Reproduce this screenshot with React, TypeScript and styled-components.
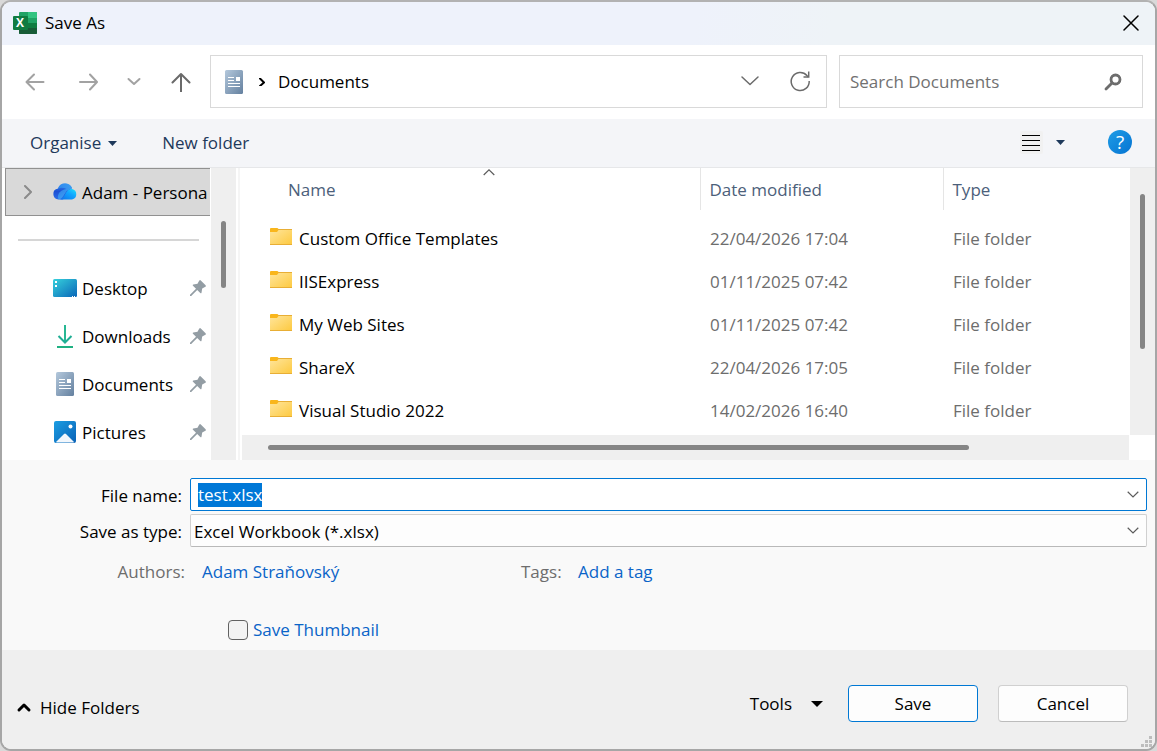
import React, { useEffect, useRef } from "react";
import styled, { createGlobalStyle, css } from "styled-components";

const GlobalStyle = createGlobalStyle`
  *, *::before, *::after { box-sizing: border-box; }
  html, body { margin: 0; padding: 0; }
  body {
    background: #d9d9d9;
    color: #000;
    font: 17px/24px "Open Sans", "Noto Sans", sans-serif;
  }
  button, input, select { font: inherit; color: inherit; margin: 0; }
`;

const Dialog = styled.main`
  position: relative;
  display: flex;
  flex-direction: column;
  min-height: 100vh;
  overflow: hidden;
  border: 2px solid #a6a6a6;
  border-top-color: #b2b2b2;
  border-radius: 11px;
  background: #fff;
`;

const TitleBar = styled.header`
  display: flex;
  align-items: center;
  gap: 8px;
  height: 43px;
  padding: 0 9px 2px 11px;
  background: linear-gradient(100deg, #eef2fb 0%, #eef2fb 60%, #eef3f7 72%);
`;

const Title = styled.h1`
  flex: 1;
  margin: 0;
  font-size: 17px;
  font-weight: 400;
`;

const PlainButton = styled.button`
  display: inline-flex;
  align-items: center;
  justify-content: center;
  padding: 0;
  border: 0;
  background: none;
  cursor: pointer;
`;

const CloseButton = styled(PlainButton)`
  width: 30px;
  height: 30px;
`;

const NavBar = styled.nav`
  display: flex;
  align-items: flex-start;
  height: 74px;
  padding: 10px 12px 0 6px;
`;

const NavButtons = styled.div`
  display: flex;
  flex: none;
  align-items: center;
  width: 202px;
  height: 53px;
`;

const NavButton = styled(PlainButton)<{ $narrow?: boolean; $strong?: boolean }>`
  width: ${(p) => (p.$narrow ? 40 : 53)}px;
  height: 40px;
  color: ${(p) => (p.$strong ? "#6a6a6a" : "#a2a2a2")};
`;

const AddressBar = styled.div`
  display: flex;
  flex: 1;
  align-items: center;
  gap: 12px;
  height: 53px;
  padding: 0 15px 0 11px;
  border: 1px solid #d9d9d9;
`;

const Crumb = styled(PlainButton)`
  flex: 1;
  justify-content: flex-start;
`;

const AddressAction = styled(PlainButton)`
  width: 39px;
  height: 24px;
  color: #6b6b6b;

  &:last-child {
    width: 22px;
    margin-left: 8px;
  }
`;

const SearchBox = styled.div`
  display: flex;
  align-items: center;
  width: 304px;
  height: 53px;
  margin-left: 12px;
  padding: 0 20px 0 10px;
  border: 1px solid #d9d9d9;
`;

const SearchInput = styled.input`
  flex: 1;
  min-width: 0;
  padding: 0;
  border: 0;
  outline: 0;
  background: none;

  &::placeholder { color: #717171; opacity: 1; }
`;

const Toolbar = styled.div`
  display: flex;
  align-items: center;
  gap: 45px;
  height: 49px;
  padding: 0 23px 0 28px;
  border-bottom: 1px solid #e6e7e9;
  background: #f4f5f8;
  color: #1e395b;
`;

const ToolbarButton = styled(PlainButton)`
  gap: 7px;
`;

const ViewButton = styled(PlainButton)`
  gap: 13px;
  margin: 0 -2px 2px auto;
`;

const HelpButton = styled(PlainButton)`
  width: 24px;
  height: 24px;
  margin-bottom: 2px;
  border-radius: 50%;
  background: linear-gradient(135deg, #1f9de6, #0573d2);
  color: #fff;
  font-size: 19px;
  line-height: 24px;
`;

const Browser = styled.div`
  display: flex;
  flex: 1;
  min-height: 292px;
`;

const TreePane = styled.aside`
  display: flex;
  flex: none;
  width: 238px;
  border-right: 2px solid #f5f5f5;
`;

const TreeList = styled.ul`
  width: 209px;
  margin: 0;
  padding: 0;
  overflow: hidden;
  list-style: none;
`;

const TreeItem = styled.li<{ $selected?: boolean }>`
  display: flex;
  align-items: center;
  height: 48px;
  margin-left: 3px;
  padding: 0 5px 0 15px;
  border: 1px solid transparent;
  border-right: 0;
  white-space: nowrap;

  ${(p) =>
    p.$selected &&
    css`
      margin-right: 1px;
      padding-right: 3px;
      border-color: #919191;
      background: #d9d9d9;
    `}
`;

const Expander = styled(PlainButton)`
  width: 32px;
  height: 24px;
  flex: none;
  justify-content: flex-start;
  color: #8b8b8b;
`;

const ExpanderSpace = styled.span`
  flex: none;
  width: 32px;
`;

const TreeLabel = styled.a`
  display: flex;
  flex: 1;
  min-width: 0;
  align-items: center;
  gap: 5px;
  overflow: hidden;
  color: inherit;
  text-decoration: none;

  svg { flex: none; }
  span { padding-top: 1px; }
`;

const TreeDivider = styled.li`
  display: flex;
  align-items: center;
  height: 48px;
  padding: 0 12px 0 16px;

  &::before {
    content: "";
    flex: 1;
    height: 2px;
    background: #d6d6d6;
  }
`;

const Track = styled.div<{ $horizontal?: boolean }>`
  display: flex;
  background: #efefef;
  ${(p) => (p.$horizontal ? "height: 25px; margin: 0 1px 0 2px;" : "width: 25px;")}
`;

const Thumb = styled.div<{ $horizontal?: boolean; $start: number; $length: number }>`
  border-radius: 3px;
  background: #858585;
  ${(p) =>
    p.$horizontal
      ? css`
          width: ${p.$length}%;
          height: 5px;
          margin: 10px 0 0 ${p.$start}px;
        `
      : css`
          width: 5px;
          height: ${p.$length}%;
          margin: ${p.$start}px 0 0 10px;
        `}
`;

const FilePane = styled.section`
  display: grid;
  flex: 1;
  min-width: 0;
  grid-template-columns: minmax(0, 1fr) 25px;
  grid-template-rows: minmax(0, 1fr) 25px;
`;

const TableArea = styled.div`
  overflow: hidden;
`;

const FileTable = styled.table`
  width: 100%;
  border-collapse: collapse;
  table-layout: fixed;

  thead::after {
    content: "";
    display: block;
    height: 7px;
  }
`;

const NameCol = styled.col``;
const DateCol = styled.col`width: 243px;`;
const TypeCol = styled.col`width: 187px;`;

const HeadCell = styled.th<{ $first?: boolean }>`
  height: 42px;
  padding: 0 0 0 ${(p) => (p.$first ? 39 : 0)}px;
  border-left: ${(p) => (p.$first ? "0" : "1px solid #e5e5e5")};
  vertical-align: top;
  color: #4c607a;
  font-weight: 400;
  text-align: left;
`;

const SortButton = styled.button`
  display: block;
  width: 100%;
  padding: 1px 9px 0;
  border: 0;
  background: none;
  text-align: left;
  cursor: pointer;
`;

const SortMark = styled.span`
  display: flex;
  justify-content: center;
  height: 9px;
`;

const Cell = styled.td<{ $first?: boolean }>`
  height: 43px;
  padding: 0 0 0 ${(p) => (p.$first ? 29 : 10)}px;
  color: ${(p) => (p.$first ? "#000" : "#6d6d6d")};
  white-space: nowrap;
`;

const FileName = styled.span`
  display: flex;
  align-items: center;
  gap: 6px;
`;

const Form = styled.form`
  height: 190px;
  padding: 18px 8px 0 0;
  background: #f9f9f9;
`;

const FieldRow = styled.div`
  display: grid;
  grid-template-columns: 180px minmax(0, 1fr);
  column-gap: 8px;
  align-items: center;
  margin-bottom: 3px;

  > label {
    padding-top: 2px;
    text-align: right;
  }
`;

const ComboBox = styled.div<{ $active?: boolean }>`
  display: grid;
  grid-template-columns: minmax(0, 1fr) 26px;
  height: 33px;
  border: 1px solid ${(p) => (p.$active ? "#0078d4" : "#d0d0d0")};
  border-bottom-color: ${(p) => (p.$active ? "#0078d4" : "#b9b9b9")};
  border-radius: 2px;
  background: ${(p) => (p.$active ? "#fff" : "#fdfdfd")};
  color: #5c5c5c;

  > svg {
    grid-area: 1 / 2;
    place-self: center;
    pointer-events: none;
  }
`;

const NameInput = styled.input`
  padding: 0 7px;
  border: 0;
  outline: 0;
  background: none;
  color: #000;

  &::selection { background: #0078d7; color: #fff; }
`;

const TypeSelect = styled.select`
  grid-area: 1 / 1 / 2 / 3;
  appearance: none;
  padding: 2px 3px 0;
  border: 0;
  outline: 0;
  background: none;
  color: #000;
`;

const MetaRow = styled.dl`
  display: grid;
  grid-template-columns: 183px 336px 57px minmax(0, 1fr);
  margin: 13px 0 0;
`;

const MetaLabel = styled.dt<{ $end?: boolean }>`
  color: #6d6d6d;
  text-align: ${(p) => (p.$end ? "right" : "left")};
`;

const MetaValue = styled.dd<{ $inset?: boolean }>`
  margin: 0 0 0 ${(p) => (p.$inset ? 17 : 0)}px;
`;

const MetaLink = styled.a`
  color: #0a64c8;
  text-decoration: none;
`;

const CheckLabel = styled.label`
  display: inline-flex;
  align-items: center;
  gap: 5px;
  margin: 34px 0 0 226px;
  color: #0a64c8;
`;

const CheckBox = styled.input`
  appearance: none;
  width: 20px;
  height: 20px;
  border: 1px solid #626262;
  border-radius: 4px;
  background: #f3f3f3;
`;

const Footer = styled.footer`
  display: flex;
  align-items: flex-start;
  gap: 20px;
  height: 99px;
  padding: 35px 27px 0 14px;
  background: #efefef;
`;

const HideButton = styled(PlainButton)`
  gap: 8px;
  height: 45px;
  margin-right: auto;
`;

const ToolsButton = styled(PlainButton)`
  gap: 19px;
  height: 37px;
  padding-right: 5px;
`;

const PushButton = styled.button<{ $primary?: boolean }>`
  width: 130px;
  height: 37px;
  padding: 1px 0 0;
  border: 1px solid ${(p) => (p.$primary ? "#0078d4" : "#d0d0d0")};
  border-bottom-color: ${(p) => (p.$primary ? "#0078d4" : "#bcbcbc")};
  border-radius: 4px;
  background: #fdfdfd;
`;

const Grip = styled.svg`
  position: absolute;
  right: 3px;
  bottom: 2px;
`;

const ExcelIcon = () => (
  <svg width="24" height="22" viewBox="0 0 24 22" aria-hidden="true">
    <rect x="6" width="18" height="22" rx="1" fill="#21a366" />
    <path d="M15 0h8a1 1 0 0 1 1 1v5h-9z" fill="#33c481" />
    <path d="M6 6h9v5H6z" fill="#107c41" />
    <path d="M15 11h9v5h-9z" fill="#107c41" />
    <path d="M6 11h9v5H6z" fill="#185c37" />
    <path d="M6 16h18v5a1 1 0 0 1-1 1H7a1 1 0 0 1-1-1z" fill="#185c37" />
    <rect y="4" width="15" height="14" rx="1" fill="#107c41" />
    <text x="7" y="15" textAnchor="middle" fill="#fff" fontFamily="Open Sans, sans-serif" fontWeight="700" fontSize="12">X</text>
  </svg>
);

const Arrow = ({ d, size = 20, width = 2 }: { d: string; size?: number; width?: number }) => (
  <svg width={size} height={size} viewBox={`0 0 ${size} ${size}`} fill="none" stroke="currentColor" strokeWidth={width} strokeLinecap="round" strokeLinejoin="round" aria-hidden="true">
    <path d={d} />
  </svg>
);

const SmallChevron = ({ up }: { up?: boolean }) => (
  <svg width="12" height="7" viewBox="0 0 12 7" fill="none" stroke="#5c5c5c" strokeWidth="1.2" aria-hidden="true">
    <path d={up ? "M.7 6 6 .9 11.300 6" : "M.7.8 6 6l5.300-5.200"} />
  </svg>
);

const Caret = ({ large }: { large?: boolean }) => (
  <svg width={large ? 12 : 9} height={large ? 6 : 5} viewBox="0 0 12 6" preserveAspectRatio="none" fill="currentColor" aria-hidden="true">
    <path d="M0 0h12L6 6z" />
  </svg>
);

const DocumentIcon = ({ id }: { id: string }) => (
  <svg width="24" height="24" viewBox="0 0 24 24" aria-hidden="true">
    <defs>
      <linearGradient id={id} x1="0" y1="0" x2="1" y2="1">
        <stop offset="0" stopColor="#b4c8dc" />
        <stop offset="1" stopColor="#64809f" />
      </linearGradient>
    </defs>
    <rect x="3" width="18" height="24" rx="1.500" fill={`url(#${id})`} />
    <path d="M6 7.500h6M6 10.500h6M6 13.500h12M6 16.500h12" stroke="#fff" />
    <rect x="14" y="7" width="4" height="4" fill="#fff" />
  </svg>
);

const CloudIcon = () => (
  <svg width="24" height="24" viewBox="0 0 24 24" aria-hidden="true">
    <defs>
      <linearGradient id="cloudBack" x1="0" y1="0" x2="0" y2="1">
        <stop offset="0" stopColor="#2f8ff0" />
        <stop offset=".5" stopColor="#1e50d4" />
        <stop offset="1" stopColor="#2b6fe8" />
      </linearGradient>
      <linearGradient id="cloudTop" x1="0" y1="0" x2="1" y2="1">
        <stop offset="0" stopColor="#2f86ee" />
        <stop offset="1" stopColor="#4fc4fa" />
      </linearGradient>
      <linearGradient id="cloudFront" x1="0" y1="1" x2="1" y2="0">
        <stop offset="0" stopColor="#0f6fe8" />
        <stop offset=".6" stopColor="#12a5ff" />
        <stop offset="1" stopColor="#1fe0fb" />
      </linearGradient>
    </defs>
    <path d="M5.500 19.500A5.600 5.600 0 0 1 5 8.400 7.500 7.500 0 0 1 19 8l-9 11.500z" fill="url(#cloudBack)" />
    <path d="M5 8.400A7.500 7.500 0 0 1 19.300 9.200c-4-.4-6 2-8 5.300-1.500 2.500-3 4.500-5.300 5-2-2-1-6 1.500-8 2-1.500 4-2.500 6-2.600-3-1.500-6-1.500-8.500-.5z" fill="url(#cloudTop)" opacity=".75" />
    <path d="M6 19.500c3 0 4.500-2.500 6-5 1.700-3 3.500-5.500 7-5.400a5.300 5.300 0 0 1 0 10.400z" fill="url(#cloudFront)" />
  </svg>
);

const DesktopIcon = () => (
  <svg width="24" height="24" viewBox="0 0 24 24" aria-hidden="true">
    <defs>
      <linearGradient id="desk" x1="0" y1="0" x2="1" y2="1">
        <stop offset="0" stopColor="#36d1dc" />
        <stop offset="1" stopColor="#0a66b8" />
      </linearGradient>
    </defs>
    <rect y="3" width="24" height="18" rx="1.500" fill="url(#desk)" />
    <path d="M2 5h2v2H2zM2 9h2v2H2zM19 20h1v1h-1zM21 20h1v1h-1z" fill="#fff" />
  </svg>
);

const DownloadIcon = () => (
  <svg width="24" height="24" viewBox="0 0 24 24" fill="none" strokeWidth="2" aria-hidden="true">
    <path d="M12 1v17" stroke="#27b793" />
    <path d="m5.500 12 6.500 6.500 6.500-6.500" stroke="#1fae94" />
    <path d="M4 23h16" stroke="#1fb182" />
  </svg>
);

const PictureIcon = () => (
  <svg width="24" height="24" viewBox="0 0 24 24" aria-hidden="true">
    <defs>
      <linearGradient id="pic" x1="0" y1="0" x2="1" y2="1">
        <stop offset="0" stopColor="#1b9de2" />
        <stop offset="1" stopColor="#0a62b6" />
      </linearGradient>
    </defs>
    <rect x="1" y="1" width="22" height="22" rx="2" fill="url(#pic)" />
    <path d="M3 22 11 14q1-1 2 0l8 8q-.5.500-1 .5H4q-.5 0-1-.5z" fill="#f2f7fc" />
    <circle cx="17.500" cy="6.500" r="2" fill="#fff" />
  </svg>
);

const PinIcon = () => (
  <svg width="16" height="16" viewBox="0 0 16 16" fill="#939da4" aria-hidden="true">
    <path d="M9.300.6q.7-.9 1.500-.1l4.800 4.800q.7.900-.2 1.400l-3.200 1.700-.7 4.300q-.3 1.100-1.200.3L7.200 9.900 1.200 16H0v-1.200l6-6L3 5.800q-.7-.9.300-1.200l4.200-.8z" />
  </svg>
);

const FolderIcon = () => (
  <svg width="24" height="24" viewBox="0 0 24 24" aria-hidden="true">
    <defs>
      <linearGradient id="folder" x1="0" y1="0" x2="1" y2="1">
        <stop offset="0" stopColor="#ffe59b" />
        <stop offset="1" stopColor="#fdc93f" />
      </linearGradient>
    </defs>
    <path d="M1 2q0-1 1-1h6q1 0 1.500 1H23v3H1z" fill="#f9b61c" />
    <path d="M1 5h7l1.500-2H23v14q0 1-1 1H2q-1 0-1-1z" fill="url(#folder)" />
    <path d="M1 17.500h22M9 2.500h14" stroke="#e8ae35" />
  </svg>
);

const RefreshIcon = () => (
  <svg width="22" height="22" viewBox="0 0 22 22" fill="none" stroke="currentColor" strokeWidth="1.500" aria-hidden="true">
    <path d="M20.200 10a9 9 0 1 1-2.300-5.500l1.500 1.500" />
    <path d="M19.700.5V6H14.500" />
  </svg>
);

const SearchIcon = () => (
  <svg width="18" height="18" viewBox="0 0 18 18" fill="none" stroke="#6d6d6d" aria-hidden="true">
    <circle cx="11.500" cy="6.500" r="4.500" strokeWidth="2.800" />
    <path d="m8 10-6 6" strokeWidth="2.800" strokeLinecap="round" />
  </svg>
);

const ListIcon = () => (
  <svg width="23" height="23" viewBox="0 0 23 23" aria-hidden="true">
    <rect width="23" height="23" rx="2" fill="#f1f1f1" />
    <path d="M2 4.500h18M2 9.500h18M2 14.500h18M2 19.500h18" stroke="#000" />
  </svg>
);

const places = [
  { name: "Desktop", icon: <DesktopIcon /> },
  { name: "Downloads", icon: <DownloadIcon /> },
  { name: "Documents", icon: <DocumentIcon id="treeDoc" /> },
  { name: "Pictures", icon: <PictureIcon /> },
];

const folders = [
  { name: "Custom Office Templates", date: "22/04/2026 17:04" },
  { name: "IISExpress", date: "01/11/2025 07:42" },
  { name: "My Web Sites", date: "01/11/2025 07:42" },
  { name: "ShareX", date: "22/04/2026 17:05" },
  { name: "Visual Studio 2022", date: "14/02/2026 16:40" },
];

export default function App() {
  const nameRef = useRef<HTMLInputElement>(null);

  useEffect(() => {
    nameRef.current?.focus();
    nameRef.current?.select();
  }, []);

  return (
    <>
      <GlobalStyle />
      <Dialog>
        <TitleBar>
          <ExcelIcon />
          <Title>Save As</Title>
          <CloseButton aria-label="Close">
            <Arrow size={16} width={1.5} d="M1 1l14 14M15 1 1 15" />
          </CloseButton>
        </TitleBar>

        <NavBar>
          <NavButtons>
            <NavButton aria-label="Back">
              <Arrow d="M18.500 10H2M9 2.500 1.500 10 9 17.500" />
            </NavButton>
            <NavButton aria-label="Forward">
              <Arrow d="M2 10h16.500M12 2.500l7 7.500-7 7.500" />
            </NavButton>
            <NavButton $narrow aria-label="Recent locations">
              <Arrow d="M4.500 7 10 12l5.500-5" />
            </NavButton>
            <NavButton $strong aria-label="Up">
              <Arrow d="M10 19.500V2M1.500 10.500 10 2l8.500 8.500" />
            </NavButton>
          </NavButtons>
          <AddressBar>
            <DocumentIcon id="addressDoc" />
            <Arrow size={8} d="M2 0.500 6 4.500 2 8" />
            <Crumb>Documents</Crumb>
            <AddressAction aria-label="Previous locations">
              <Arrow width={1.5} d="M2 5l8 7.500L18 5" />
            </AddressAction>
            <AddressAction aria-label="Refresh">
              <RefreshIcon />
            </AddressAction>
          </AddressBar>
          <SearchBox>
            <SearchInput type="text" aria-label="Search Documents" placeholder="Search Documents" />
            <SearchIcon />
          </SearchBox>
        </NavBar>

        <Toolbar>
          <ToolbarButton>
            Organise
            <Caret />
          </ToolbarButton>
          <ToolbarButton>New folder</ToolbarButton>
          <ViewButton aria-label="Change view">
            <ListIcon />
            <Caret />
          </ViewButton>
          <HelpButton aria-label="Help">?</HelpButton>
        </Toolbar>

        <Browser>
          <TreePane>
            <TreeList>
              <TreeItem $selected>
                <Expander aria-label="Expand">
                  <Arrow size={14} d="M4 1l6 6-6 6" />
                </Expander>
                <TreeLabel href="#personal">
                  <CloudIcon />
                  <span>Adam - Personal</span>
                </TreeLabel>
              </TreeItem>
              <TreeDivider aria-hidden="true" />
              {places.map((place) => (
                <TreeItem key={place.name}>
                  <ExpanderSpace />
                  <TreeLabel href={`#${place.name}`}>
                    {place.icon}
                    <span>{place.name}</span>
                  </TreeLabel>
                  <PinIcon />
                </TreeItem>
              ))}
            </TreeList>
            <Track>
              <Thumb $start={53} $length={23} />
            </Track>
          </TreePane>

          <FilePane>
            <TableArea>
              <FileTable>
                <colgroup>
                  <NameCol />
                  <DateCol />
                  <TypeCol />
                </colgroup>
                <thead>
                  <tr>
                    {["Name", "Date modified", "Type"].map((label, i) => (
                      <HeadCell key={label} $first={i === 0}>
                        <SortButton>
                          <SortMark>{i === 0 && <SmallChevron up />}</SortMark>
                          {label}
                        </SortButton>
                      </HeadCell>
                    ))}
                  </tr>
                </thead>
                <tbody>
                  {folders.map((folder) => (
                    <tr key={folder.name}>
                      <Cell $first>
                        <FileName>
                          <FolderIcon />
                          {folder.name}
                        </FileName>
                      </Cell>
                      <Cell>{folder.date}</Cell>
                      <Cell>File folder</Cell>
                    </tr>
                  ))}
                </tbody>
              </FileTable>
            </TableArea>
            <Track>
              <Thumb $start={26} $length={58} />
            </Track>
            <Track $horizontal>
              <Thumb $horizontal $start={26} $length={79} />
            </Track>
          </FilePane>
        </Browser>

        <Form onSubmit={(e) => e.preventDefault()}>
          <FieldRow>
            <label htmlFor="fileName">File name:</label>
            <ComboBox $active>
              <NameInput id="fileName" ref={nameRef} type="text" defaultValue="test.xlsx" spellCheck={false} />
              <SmallChevron />
            </ComboBox>
          </FieldRow>
          <FieldRow>
            <label htmlFor="fileType">Save as type:</label>
            <ComboBox>
              <TypeSelect id="fileType">
                <option>Excel Workbook (*.xlsx)</option>
              </TypeSelect>
              <SmallChevron />
            </ComboBox>
          </FieldRow>
          <MetaRow>
            <MetaLabel $end>Authors:</MetaLabel>
            <MetaValue $inset>
              <MetaLink href="#authors">Adam Straňovský</MetaLink>
            </MetaValue>
            <MetaLabel>Tags:</MetaLabel>
            <MetaValue>
              <MetaLink href="#tags">Add a tag</MetaLink>
            </MetaValue>
          </MetaRow>
          <CheckLabel>
            <CheckBox type="checkbox" />
            Save Thumbnail
          </CheckLabel>
        </Form>

        <Footer>
          <HideButton>
            <Arrow size={16} width={3} d="M3 10l5-5 5 5" />
            Hide Folders
          </HideButton>
          <ToolsButton>
            Tools
            <Caret large />
          </ToolsButton>
          <PushButton $primary>Save</PushButton>
          <PushButton>Cancel</PushButton>
        </Footer>

        <Grip width="11" height="11" viewBox="0 0 11 11" fill="#bdbdbd" aria-hidden="true">
          <path d="M8 0h3v3H8zM4 4h3v3H4zM8 4h3v3H8zM0 8h3v3H0zM4 8h3v3H4zM8 8h3v3H8z" />
        </Grip>
      </Dialog>
    </>
  );
}
